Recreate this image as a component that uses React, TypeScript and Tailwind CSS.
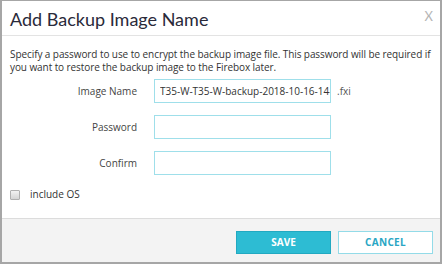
import React from 'react';

export default function App() {
  return (
    <div className="w-[442px] h-[265px] bg-white">
      <div className="w-[442px] h-[264px] flex flex-col border-t border-l-2 border-r-2 border-b-2 border-[#a6a6a6] bg-white font-['Open_Sans',sans-serif]">
        {/* Header */}
        <div className="h-[35px] shrink-0 flex items-center justify-between border-b border-[#e3e3e3] pl-[8px] pr-[7px]">
          <span className="font-['Lato',sans-serif] text-[18px] text-[#2a2a3a] leading-none pt-[1px]">Add Backup Image Name</span>
          <span className="font-['Lato',sans-serif] text-[13px] text-[#b5b5b5] leading-none -mt-[4px]">X</span>
        </div>

        {/* Body */}
        <div className="h-[182px] shrink-0 pl-[8px] pr-[2px] pt-[12px]">
          <p className="text-[10px] leading-[13px] text-[#333] tracking-[-0.08px]">
            Specify a password to use to encrypt the backup image file. This password will be required if you want to restore the backup image to the Firebox later.
          </p>

          <div className="mt-[5px] flex flex-col gap-[12px] -ml-[8px]">
            <div className="flex items-center">
              <label className="w-[135px] text-right text-[10px] text-[#444]">Image Name</label>
              <input
                readOnly
                value="T35-W-T35-W-backup-2018-10-16-14-54"
                className="ml-[17px] w-[177px] h-[24px] border border-[#9fdfea] pl-[5px] text-[10px] text-[#333] outline-none"
              />
              <span className="ml-[6px] text-[10px] text-[#555]">.fxi</span>
            </div>
            <div className="flex items-center">
              <label className="w-[135px] text-right text-[10px] text-[#444]">Password</label>
              <input type="password" readOnly className="ml-[17px] w-[177px] h-[24px] border border-[#9fdfea] outline-none" />
            </div>
            <div className="flex items-center">
              <label className="w-[135px] text-right text-[10px] text-[#444]">Confirm</label>
              <input type="password" readOnly className="ml-[17px] w-[177px] h-[24px] border border-[#9fdfea] outline-none" />
            </div>
          </div>

          <div className="mt-[12px] flex items-center">
            <div className="w-[10px] h-[10px] border border-[#b0b0b0] rounded-[1px] bg-gradient-to-b from-[#f2f2f2] to-[#d4d4d4]" />
            <span className="ml-[10px] text-[10px] text-[#333]">include OS</span>
          </div>
        </div>

        {/* Footer */}
        <div className="flex-1 border-t border-[#dcdcdc] bg-[#f3f3f3] flex items-start justify-end pt-[12px] pr-[7px] gap-[7px]">
          <button className="w-[95px] h-[23px] bg-[#2dbcd3] border border-[#22a9c1] text-white text-[10px] font-bold">SAVE</button>
          <button className="w-[95px] h-[23px] bg-white border border-[#93dbe8] text-[#2aa6c4] text-[10px] font-bold tracking-[0.3px]">CANCEL</button>
        </div>
      </div>
    </div>
  );
}
